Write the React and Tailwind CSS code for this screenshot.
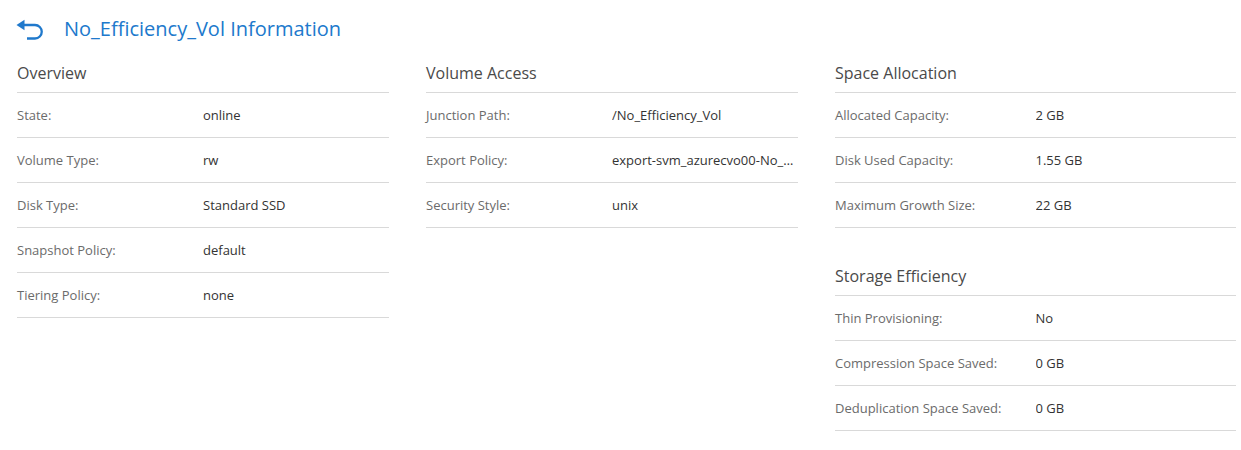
import React from 'react';

const sections = {
  overview: [
    ['State:', 'online'],
    ['Volume Type:', 'rw'],
    ['Disk Type:', 'Standard SSD'],
    ['Snapshot Policy:', 'default'],
    ['Tiering Policy:', 'none'],
  ],
  access: [
    ['Junction Path:', '/No_Efficiency_Vol'],
    ['Export Policy:', 'export-svm_azurecvo00-No_Efficiency_Vol'],
    ['Security Style:', 'unix'],
  ],
  space: [
    ['Allocated Capacity:', '2 GB'],
    ['Disk Used Capacity:', '1.55 GB'],
    ['Maximum Growth Size:', '22 GB'],
  ],
  efficiency: [
    ['Thin Provisioning:', 'No'],
    ['Compression Space Saved:', '0 GB'],
    ['Deduplication Space Saved:', '0 GB'],
  ],
};

function BackIcon() {
  return (
    <svg width="28" height="24" viewBox="0 0 28 24" className="shrink-0">
      <polygon points="0.5,8 8.5,2.8 8.5,13.2" fill="#2079cc" />
      <path d="M8 8 H19 A6.75 6.75 0 0 1 19 21.5 H11" fill="none" stroke="#2079cc" strokeWidth="2.3" />
    </svg>
  );
}

function Section({ title, rows, className = '' }) {
  return (
    <div className={className}>
      <div className="text-[16px] leading-[24px] text-[#4a4a4a] pb-[7px] border-b border-[#d9d9d9]">{title}</div>
      {rows.map(([label, value]) => (
        <div key={label} className="h-[45px] pt-[2px] flex items-center border-b border-[#d9d9d9] text-[13px]">
          <div className="w-1/2 min-w-0 text-[#6b6b6b] whitespace-nowrap">{label}</div>
          <div className="w-1/2 min-w-0 text-[#333] truncate pr-[4px]">{value}</div>
        </div>
      ))}
    </div>
  );
}

export default function App() {
  return (
    <div className="bg-white w-full min-h-[450px] pl-[17px] pr-[5px] pt-[15px]" style={{ fontFamily: '"Open Sans", sans-serif' }}>
      <div className="flex items-center h-[28px] -ml-[1px]">
        <BackIcon />
        <h1 className="ml-[20px] text-[20px] leading-[28px] text-[#2079cc]">No_Efficiency_Vol Information</h1>
      </div>
      <div className="grid grid-cols-[372px_372px_1fr] gap-x-[37px] mt-[18px]">
        <Section title="Overview" rows={sections.overview} />
        <Section title="Volume Access" rows={sections.access} />
        <div>
          <Section title="Space Allocation" rows={sections.space} />
          <Section title="Storage Efficiency" rows={sections.efficiency} className="mt-[36px]" />
        </div>
      </div>
    </div>
  );
}
